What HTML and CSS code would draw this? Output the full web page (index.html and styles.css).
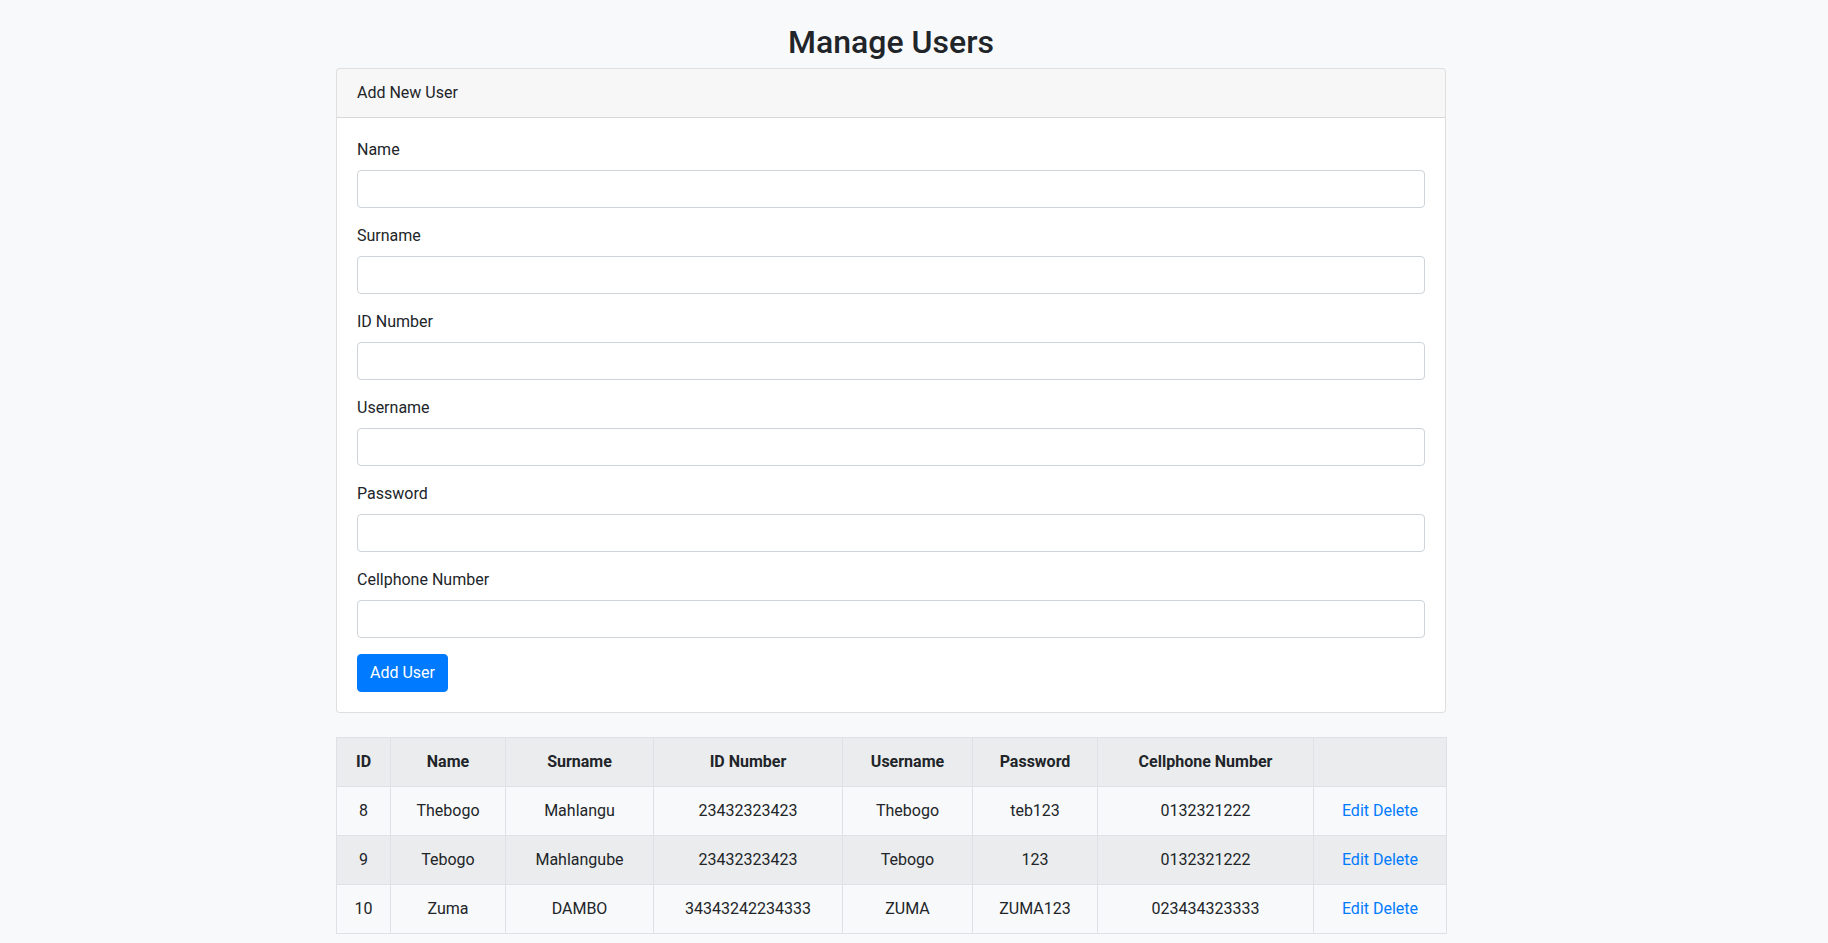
FILE: index.html
```html
<!DOCTYPE html>
<html lang="en">
<head>
<meta charset="utf-8">
<title>Manage Users</title>
<link rel="stylesheet" href="styles.css">
</head>
<body>
<div class="page">
  <div class="container">
    <h2 class="title">Manage Users</h2>
    <div class="card">
      <div class="card-header">Add New User</div>
      <div class="card-body">
        <form class="form">
          <div class="form-group">
            <label class="label">Name</label>
            <input class="input" type="text">
          </div>
          <div class="form-group">
            <label class="label">Surname</label>
            <input class="input" type="text">
          </div>
          <div class="form-group">
            <label class="label">ID Number</label>
            <input class="input" type="text">
          </div>
          <div class="form-group">
            <label class="label">Username</label>
            <input class="input" type="text">
          </div>
          <div class="form-group">
            <label class="label">Password</label>
            <input class="input" type="password">
          </div>
          <div class="form-group">
            <label class="label">Cellphone Number</label>
            <input class="input" type="text">
          </div>
          <button class="btn" type="button">Add User</button>
        </form>
      </div>
    </div>

    <table class="table">
      <colgroup>
        <col class="c-id"><col class="c-name"><col class="c-surname"><col class="c-idnum"><col class="c-user"><col class="c-pass"><col class="c-cell"><col class="c-act">
      </colgroup>
      <thead>
        <tr>
          <th>ID</th><th>Name</th><th>Surname</th><th>ID Number</th><th>Username</th><th>Password</th><th>Cellphone Number</th><th></th>
        </tr>
      </thead>
      <tbody>
        <tr>
          <td>8</td><td>Thebogo</td><td>Mahlangu</td><td>23432323423</td><td>Thebogo</td><td>teb123</td><td>0132321222</td>
          <td><a class="link" href="#">Edit</a> <a class="link" href="#">Delete</a></td>
        </tr>
        <tr>
          <td>9</td><td>Tebogo</td><td>Mahlangube</td><td>23432323423</td><td>Tebogo</td><td>123</td><td>0132321222</td>
          <td><a class="link" href="#">Edit</a> <a class="link" href="#">Delete</a></td>
        </tr>
        <tr>
          <td>10</td><td>Zuma</td><td>DAMBO</td><td>34343242234333</td><td>ZUMA</td><td>ZUMA123</td><td>023434323333</td>
          <td><a class="link" href="#">Edit</a> <a class="link" href="#">Delete</a></td>
        </tr>
      </tbody>
    </table>
  </div>
</div>
</body>
</html>
```

FILE: styles.css
```css
* { box-sizing: border-box; }

html, body {
  margin: 0;
  padding: 0;
  background: #f8f9fa;
}

body {
  font-family: "Segoe UI", Roboto, "Liberation Sans", Arial, sans-serif;
  font-size: 16px;
  line-height: 1.5;
  color: #212529;
}

.page {
  padding-right: 46px;
}

.container {
  max-width: 1140px;
  margin: 0 auto;
  padding: 23.4px 15px 0;
}

.title {
  margin: 0 0 6.2px;
  font-size: 32px;
  font-weight: 500;
  line-height: 1.2;
  text-align: center;
}

.card {
  background: #fff;
  border: 1px solid rgba(0, 0, 0, 0.125);
  border-radius: 4px;
}

.card-header {
  padding: 12px 20px;
  background: rgba(0, 0, 0, 0.03);
  border-bottom: 1px solid rgba(0, 0, 0, 0.125);
  border-radius: 3px 3px 0 0;
}

.card-body {
  padding: 20px;
}

.form { margin: 0; }

.form-group {
  margin-bottom: 16px;
}

.label {
  display: inline-block;
  margin-bottom: 8px;
}

.input {
  display: block;
  width: 100%;
  height: 38px;
  padding: 6px 12px;
  font: inherit;
  color: #495057;
  background: #fff;
  border: 1px solid #ced4da;
  border-radius: 4px;
}

.btn {
  display: inline-block;
  height: 38px;
  padding: 6px 12px;
  font: inherit;
  line-height: 1.5;
  color: #fff;
  background: #007bff;
  border: 1px solid #007bff;
  border-radius: 4px;
  cursor: pointer;
}

.table {
  width: 100%;
  margin-top: 24px;
  border-collapse: collapse;
  table-layout: fixed;
  color: #212529;
}

.c-id { width: 54px; }
.c-name { width: 115px; }
.c-surname { width: 148px; }
.c-idnum { width: 189px; }
.c-user { width: 130px; }
.c-pass { width: 125px; }
.c-cell { width: 216px; }
.c-act { width: 133px; }

.table th,
.table td {
  padding: 12px;
  border: 1px solid #dee2e6;
  text-align: center;
  vertical-align: top;
  white-space: nowrap;
}

.table th {
  font-weight: 700;
  background: rgba(0, 0, 0, 0.05);
}

.table tbody tr:nth-child(even) {
  background: rgba(0, 0, 0, 0.05);
}

.link {
  color: #007bff;
  text-decoration: none;
}
```
